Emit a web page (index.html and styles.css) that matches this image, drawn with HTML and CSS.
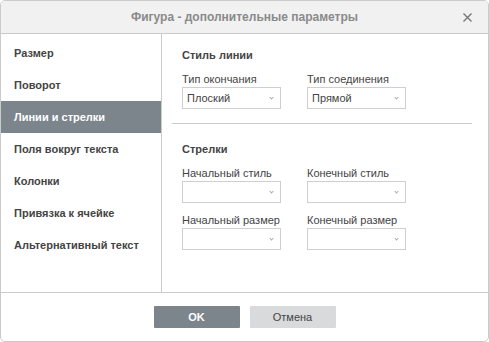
FILE: index.html
```html
<!DOCTYPE html>
<html lang="ru">
<head>
  <meta charset="UTF-8" />
  <title>Фигура - дополнительные параметры</title>
  <link rel="stylesheet" href="styles.css">
</head>
<body>
  <div class="dialog">
    <div class="header">
      <span class="title">Фигура - дополнительные параметры</span>
      <svg class="close" width="11" height="11" viewBox="0 0 11 11">
        <path d="M1.5 1.5L9.5 9.5M9.5 1.5L1.5 9.5" stroke="#777" stroke-width="1.4" fill="none" />
      </svg>
    </div>

    <div class="body">
      <ul class="menu">
        <li>Размер</li>
        <li>Поворот</li>
        <li class="active">Линии и стрелки</li>
        <li>Поля вокруг текста</li>
        <li>Колонки</li>
        <li>Привязка к ячейке</li>
        <li>Альтернативный текст</li>
      </ul>

      <div class="panel">
        <div class="section">
          <div class="section-title">Стиль линии</div>
          <div class="row">
            <div class="field">
              <label>Тип окончания</label>
              <div class="combo"><span>Плоский</span><i class="caret"></i></div>
            </div>
            <div class="field">
              <label>Тип соединения</label>
              <div class="combo"><span>Прямой</span><i class="caret"></i></div>
            </div>
          </div>
        </div>

        <hr class="sep">

        <div class="section">
          <div class="section-title">Стрелки</div>
          <div class="row">
            <div class="field">
              <label>Начальный стиль</label>
              <div class="combo"><span></span><i class="caret"></i></div>
            </div>
            <div class="field">
              <label>Конечный стиль</label>
              <div class="combo"><span></span><i class="caret"></i></div>
            </div>
          </div>
          <div class="row">
            <div class="field">
              <label>Начальный размер</label>
              <div class="combo"><span></span><i class="caret"></i></div>
            </div>
            <div class="field">
              <label>Конечный размер</label>
              <div class="combo"><span></span><i class="caret"></i></div>
            </div>
          </div>
        </div>
      </div>
    </div>

    <div class="footer">
      <button class="btn primary">OK</button>
      <button class="btn">Отмена</button>
    </div>
  </div>
</body>
</html>
```

FILE: styles.css
```css
body {
  margin: 0;
  font-family: 'Liberation Sans', Arial, sans-serif;
  font-size: 11px;
  color: #444;
  background: #fff;
}
.dialog {
  width: 489px;
  height: 342px;
  box-sizing: border-box;
  border: 1px solid #cbcbcb;
  border-radius: 5px;
  overflow: hidden;
  display: flex;
  flex-direction: column;
}
.header {
  height: 32px;
  flex: none;
  background: #f1f1f1;
  border-bottom: 1px solid #cbcbcb;
  display: flex;
  align-items: center;
  justify-content: center;
  position: relative;
}
.title {
  font-size: 12px;
  font-weight: bold;
  color: #8a8a8a;
}
.close {
  position: absolute;
  right: 15px;
  top: 11px;
}
.body {
  flex: 1;
  display: flex;
  border-bottom: 1px solid #cbcbcb;
}
.menu {
  list-style: none;
  margin: 0;
  padding: 3px 0 0;
  width: 160px;
  border-right: 1px solid #cbcbcb;
}
.menu li {
  height: 32px;
  line-height: 32px;
  padding-left: 13px;
  font-weight: bold;
  color: #444;
}
.menu li.active {
  background: #7d858c;
  color: #fff;
}
.panel {
  flex: 1;
  padding: 14px 0 0 10px;
}
.section {
  padding-left: 10px;
}
.section-title {
  font-weight: bold;
  line-height: 14px;
  margin-bottom: 10px;
}
.row {
  display: flex;
  gap: 26px;
  margin-bottom: 10px;
}
.field label {
  display: block;
  line-height: 14px;
  margin-bottom: 1px;
}
.combo {
  width: 99px;
  height: 22px;
  box-sizing: border-box;
  border: 1px solid #cfcfcf;
  display: flex;
  align-items: center;
  justify-content: space-between;
  padding: 0 7px 0 4px;
  font-size: 11px;
  color: #444;
}
.caret {
  width: 2px;
  height: 2px;
  border-right: 1px solid #aaa;
  border-bottom: 1px solid #aaa;
  transform: rotate(45deg);
  margin-top: -2px;
}
.sep {
  width: 300px;
  margin: 14px 0 18px;
  border: none;
  border-top: 1px solid #cbcbcb;
}
.footer {
  height: 48px;
  flex: none;
  display: flex;
  align-items: center;
  justify-content: center;
  gap: 10px;
}
.btn {
  width: 86px;
  height: 22px;
  border: none;
  border-radius: 1px;
  background: #d8dadc;
  color: #444;
  font-family: inherit;
  font-size: 11px;
}
.btn.primary {
  background: #7d858c;
  color: #fff;
  font-weight: bold;
}
```
